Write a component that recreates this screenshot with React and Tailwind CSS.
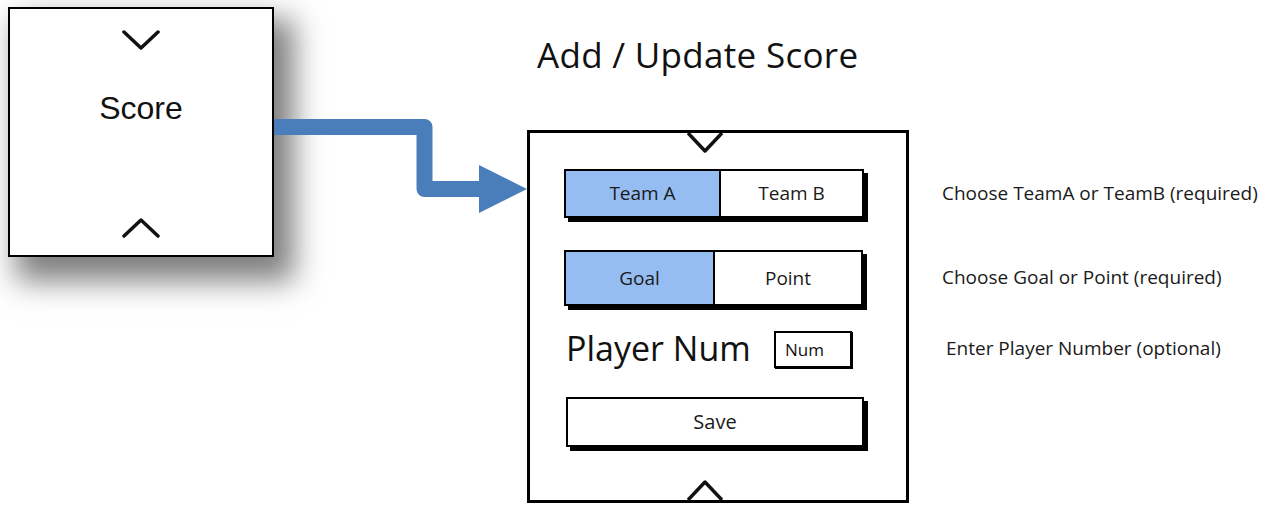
import React from "react";

function Chevron({ up = false, className = "" }) {
  // simple V / ^ drawn as a polyline
  return (
    <svg
      width="38"
      height="20"
      viewBox="0 0 38 20"
      className={className}
      fill="none"
      stroke="#111"
      strokeWidth="3.5"
      strokeLinecap="round"
      strokeLinejoin="round"
    >
      {up ? (
        <polyline points="2,18 19,2 36,18" />
      ) : (
        <polyline points="2,2 19,18 36,2" />
      )}
    </svg>
  );
}

function Segment({ left, right, leftWidth, width, height }) {
  return (
    <div
      className={`ml-[34px] flex border-2 border-black shadow-[4px_4px_0_0_#000] text-[19px] text-[#1a1a1a] ${width} ${height}`}
    >
      <div
        className={`flex items-center justify-center border-r-2 border-black bg-[#95bdf2] ${leftWidth}`}
      >
        {left}
      </div>
      <div className="flex flex-1 items-center justify-center bg-white">
        {right}
      </div>
    </div>
  );
}

export default function App() {
  return (
    <div className="flex h-[507px] w-[1274px] overflow-hidden bg-white font-['Open_Sans',sans-serif] text-[#111]">
      {/* Score widget */}
      <div className="ml-[8px] mt-[7px] flex h-[250px] w-[266px] shrink-0 flex-col items-center border-2 border-black bg-white shadow-[14px_18px_28px_6px_rgba(0,0,0,0.5)]">
        <Chevron className="mt-[21px]" />
        <span className="mt-[40px] font-['Liberation_Sans',sans-serif] text-[32px] leading-[36px]">
          Score
        </span>
        <Chevron up className="mt-[92px]" />
      </div>

      {/* flow arrow */}
      <svg
        width="253"
        height="100"
        viewBox="0 0 253 100"
        className="mt-[113px] shrink-0"
      >
        <path
          d="M0 14 H150.5 V76 H208"
          fill="none"
          stroke="#4a7ebb"
          strokeWidth="16"
          strokeLinejoin="round"
        />
        <polygon points="205,52 253,76 205,100" fill="#4a7ebb" />
      </svg>

      {/* form mockup */}
      <div className="flex w-[382px] shrink-0 flex-col">
        <h1 className="ml-[10px] mt-[33px] whitespace-nowrap text-[35px] leading-[44px] tracking-[0.3px]">
          Add / Update Score
        </h1>
        <div className="mt-[53px] flex h-[373px] flex-col border-[3px] border-black">
          <svg
            width="36"
            height="20"
            viewBox="0 0 36 20"
            className="ml-[157px]"
            fill="none"
            stroke="#111"
            strokeWidth="3.5"
            strokeLinejoin="round"
          >
            <polyline points="1,0 18,18 35,0" />
          </svg>

          <div className="mt-[16px]">
            <Segment
              left="Team A"
              right="Team B"
              leftWidth="w-[155px]"
              width="w-[300px]"
              height="h-[49px]"
            />
          </div>

          <div className="mt-[32px]">
            <Segment
              left="Goal"
              right="Point"
              leftWidth="w-[149px]"
              width="w-[299px]"
              height="h-[56px]"
            />
          </div>

          <div className="ml-[36px] mt-[25px] flex h-[37px] items-center">
            <span className="-mt-[4px] w-[208px] whitespace-nowrap text-[34px] leading-none">
              Player Num
            </span>
            <div className="flex h-[37px] w-[78px] items-center border-2 border-black pl-[9px] text-[17px] shadow-[1px_1px_0_0_#000]">
              Num
            </div>
          </div>

          <button className="ml-[36px] mt-[29px] flex h-[50px] w-[298px] items-center justify-center border-2 border-black bg-white text-[20px] text-[#1a1a1a] shadow-[4px_4px_0_0_#000]">
            Save
          </button>

          <svg
            width="36"
            height="20"
            viewBox="0 0 36 20"
            className="ml-[157px] mt-[33px]"
            fill="none"
            stroke="#111"
            strokeWidth="3.5"
            strokeLinejoin="round"
          >
            <polyline points="1,20 18,2 35,20" />
          </svg>
        </div>
      </div>

      {/* annotations */}
      <div className="ml-[33px] flex flex-col text-[19px] leading-[24px] text-[#1a1a1a]">
        <p className="mt-[181px] whitespace-nowrap">Choose TeamA or TeamB (required)</p>
        <p className="mt-[60px] whitespace-nowrap">Choose Goal or Point (required)</p>
        <p className="ml-[4px] mt-[47px] whitespace-nowrap">Enter Player Number (optional)</p>
      </div>
    </div>
  );
}
